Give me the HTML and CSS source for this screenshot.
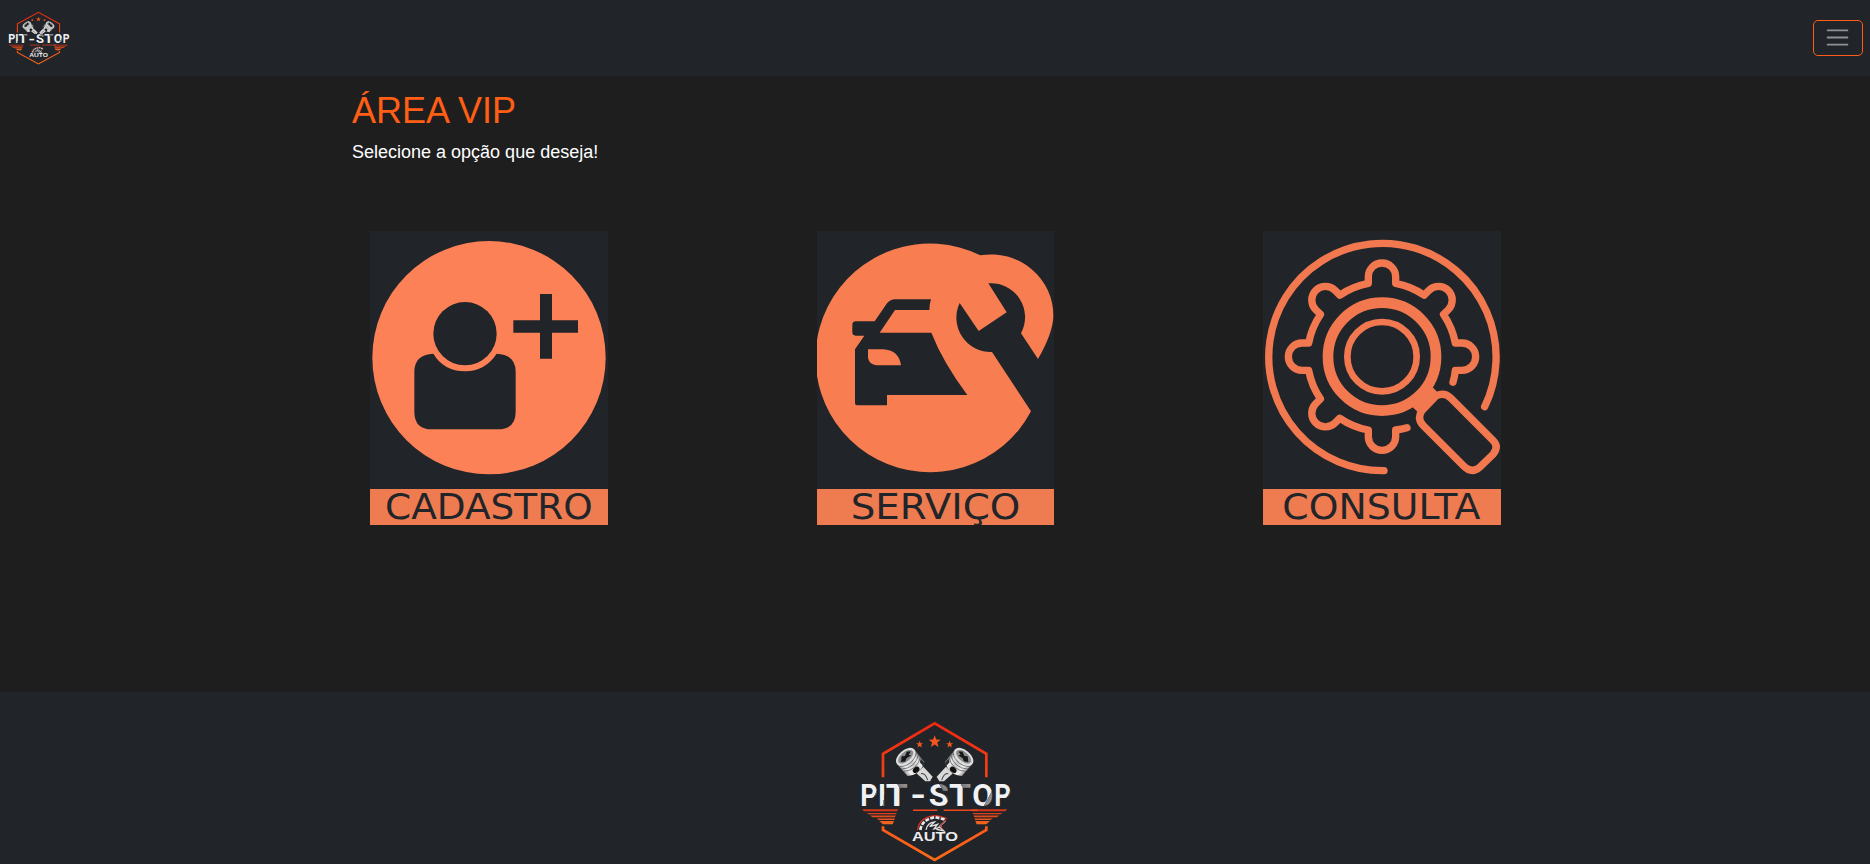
FILE: index.html
```html
<!DOCTYPE html>
<html lang="pt-BR">
<head>
<meta charset="utf-8">
<title>Pit-Stop Auto</title>
<link rel="stylesheet" href="styles.css">
</head>
<body>
<svg class="defs" aria-hidden="true">
  <defs>
    <linearGradient id="frame" gradientUnits="userSpaceOnUse" x1="0" y1="126" x2="0" y2="543"><stop offset="0" stop-color="#f02712"/><stop offset="1" stop-color="#ff6a18"/></linearGradient>
    <linearGradient id="wing" gradientUnits="userSpaceOnUse" x1="0" y1="387" x2="0" y2="432"><stop offset="0" stop-color="#d5301a"/><stop offset="1" stop-color="#f4681c"/></linearGradient>
    <linearGradient id="steel" x1="0" y1="0" x2="1" y2="0"><stop offset="0" stop-color="#999"/><stop offset=".2" stop-color="#f2f2f2"/><stop offset=".55" stop-color="#c8c8c8"/><stop offset=".8" stop-color="#eee"/><stop offset="1" stop-color="#777"/></linearGradient>
    <linearGradient id="chrome" x1="0" y1="0" x2="1" y2="1"><stop offset="0" stop-color="#f4f4f5"/><stop offset=".66" stop-color="#f0f0f2"/><stop offset=".67" stop-color="#858689"/><stop offset="1" stop-color="#b9babd"/></linearGradient>
    <linearGradient id="chrome2" x1="0" y1="1" x2="1" y2="0"><stop offset="0" stop-color="#f4f4f5"/><stop offset=".64" stop-color="#f0f0f2"/><stop offset=".65" stop-color="#77787b"/><stop offset="1" stop-color="#a9aaad"/></linearGradient>
    <g id="piston">
      <path d="M200 280L220 260L248 290L240 303H226Z" fill="#d8d8d8"/>
      <path d="M213 281q12-4 20 19" fill="none" stroke="#444" stroke-width="3"/>
      <g transform="translate(167 230) rotate(-40)">
        <path d="M-34 0L-33 48Q0 70 33 48L34 0Z" fill="url(#steel)"/>
        <path d="M-34 11Q0 36 34 11M-34 20Q0 45 34 20M-34 29Q0 54 34 29" fill="none" stroke="#505254" stroke-width="2"/>
        <ellipse cx="-1" cy="50" rx="11" ry="8" fill="#111"/>
        <path d="M31 34v16l-9 6V40z" fill="#292b2d"/>
        <ellipse rx="34" ry="20" fill="#dedede"/>
        <ellipse rx="27" ry="14" fill="#8a8b8c"/>
        <path d="M-21 3L-8-9L0-3L13-10L22-2L11 1L15 8L0 5L-10 10Z" fill="#171819"/>
      </g>
    </g>
    <path id="star" d="M0-19L4.700-6.500L18-6L7.600 2.500L11.500 15.500L0 8L-11.500 15.500L-7.600 2.500L-18-6L-4.700-6.500Z" fill="#f4561f"/>
    <g id="wings">
      <path d="M36 387H144L142 393H42Z"/><path d="M50 398H140L138 402H57Z"/><path d="M60 406H137L135 411H68Z"/><path d="M80 415H134L133 419H87Z"/><path d="M88 422H132L128 432H99Z"/>
    </g>
    <symbol id="logo" viewBox="30 120 456 428" preserveAspectRatio="none">
      <path d="M99 291V221L254 130L409 221V291M99 438V449L254 539L409 449V438" fill="none" stroke="url(#frame)" stroke-width="8"/>
      <use href="#star" x="254" y="185"/>
      <use href="#star" transform="translate(209 193) scale(.58)"/>
      <use href="#star" transform="translate(299 193) scale(.58)"/>
      <use href="#piston"/>
      <use href="#piston" transform="translate(508 0) scale(-1 1)"/>
      <g class="brand">
        <text x="31" y="376" textLength="52" lengthAdjust="spacingAndGlyphs" fill="url(#chrome)">P</text>
        <text x="84" y="376" textLength="24" lengthAdjust="spacingAndGlyphs" fill="url(#chrome)">I</text>
        <text x="107" y="376" textLength="66" lengthAdjust="spacingAndGlyphs" fill="url(#chrome2)">T</text>
        <text x="181" y="378" textLength="48" lengthAdjust="spacingAndGlyphs" fill="#f2f2f4">-</text>
        <text x="236" y="376" textLength="60" lengthAdjust="spacingAndGlyphs" fill="url(#chrome2)">S</text>
        <text x="297" y="376" textLength="66" lengthAdjust="spacingAndGlyphs" fill="url(#chrome2)">T</text>
        <text x="367" y="376" textLength="63" lengthAdjust="spacingAndGlyphs" fill="url(#chrome)">O</text>
        <text x="433" y="376" textLength="50" lengthAdjust="spacingAndGlyphs" fill="url(#chrome)">P</text>
      </g>
      <g fill="url(#wing)"><use href="#wings"/><use href="#wings" transform="translate(508 0) scale(-1 1)"/></g>
      <path d="M189 390H262M281 390H383" stroke="#ef481d" stroke-width="5"/>
      <path d="M203 450Q207 407 262 406L291 415" fill="none" stroke="#d72d22" stroke-width="4"/>
      <path d="M211 449Q216 417 256 411L287 418" fill="none" stroke="#e8e8e8" stroke-width="8" stroke-dasharray="12 4"/>
      <path d="M228 449Q232 427 254 425L239 439L263 432L252 446L275 440M286 422L268 439L281 452L259 447" fill="none" stroke="#dedede" stroke-width="4"/>
      <path d="M288 418L270 438L279 447" fill="none" stroke="#c63127" stroke-width="3"/>
      <text class="auto" x="186" y="483" textLength="138" lengthAdjust="spacingAndGlyphs">AUTO</text>
    </symbol>
  </defs>
</svg>

<header class="topbar">
  <svg class="logo-small"><use href="#logo"/></svg>
  <button class="toggler" aria-label="Menu">
    <svg viewBox="0 0 30 30"><path d="M4 7h22M4 15h22M4 23h22" stroke="#909294" stroke-width="2" stroke-linecap="round"/></svg>
  </button>
</header>

<main class="content">
  <h1>ÁREA VIP</h1>
  <p>Selecione a opção que deseja!</p>
  <nav class="tiles">
    <svg class="tile" viewBox="30 33 714 882">
      <path class="panel" d="M30 33H744V807H30Z"/>
      <circle cx="387" cy="413" r="350" fill="#fd8157"/>
      <g class="ink">
        <circle cx="315" cy="341" r="95"/>
        <path d="M220 401Q251 453 315 454Q376 453 410 401Q467 404 467 455V575Q467 628 413 628H216Q163 628 163 575V455Q163 404 220 401Z"/>
        <path d="M540 222H576V301H654V338H576V416H540V338H460V301H540Z"/>
      </g>
      <path class="band" d="M30 807H744V915H30Z"/>
      <text class="caption" x="75" y="898" textLength="623" lengthAdjust="spacingAndGlyphs">CADASTRO</text>
    </svg>
    <svg class="tile" viewBox="33 33 714 882">
      <path class="panel" d="M33 33H744V807H33Z"/>
      <path fill="#f87d51" d="M523 106A187 183 0 0 1 742 290Q740 340 696 417L645 340A102 102 0 0 0 547 190L602 277L518 333L461 249A103 103 0 0 0 558 396L675 574A343 343 0 1 1 523 106Z"/>
      <path class="ink" fill-rule="evenodd" d="M265 238H375Q370 253 370 270H267L221 338H376Q410 425 484 525H243V556H153Q147 556 147 550V388L175 347H149Q139 347 139 337V315Q139 304 149 304H206L242 251Q250 240 265 238ZM186 388V414Q190 434 212 436H285Q278 390 231 388Z"/>
      <path class="band" d="M33 807H744V915H33Z"/>
      <text class="caption" x="134" y="898" textLength="509" lengthAdjust="spacingAndGlyphs">SERVIÇO</text>
    </svg>
    <svg class="tile" viewBox="33 33 714 882">
      <path class="panel" d="M33 33H747V807H33Z"/>
      <g class="lines" transform="translate(390 410)">
        <path d="M6 342A341 341 0 1 1 308 150"/>
        <circle r="162" stroke-width="32"/>
        <circle r="104" stroke-width="20"/>
        <path d="M213 77A224 224 0 0 0 220 41L240 41A41 41 0 0 0 240-41L220-41A224 224 0 0 0 184.500-126.600L198.700-140.700A41 41 0 0 0 140.700-198.700L126.600-184.500A224 224 0 0 0 41-220L41-240A41 41 0 0 0-41-240L-41-220A224 224 0 0 0-126.600-184.500L-140.700-198.700A41 41 0 0 0-198.700-140.700L-184.500-126.600A224 224 0 0 0-220-41L-240-41A41 41 0 0 0-240 41L-220 41A224 224 0 0 0-184.500 126.600L-198.700 140.700A41 41 0 0 0-140.700 198.700L-126.600 184.500A224 224 0 0 0-41 220L-41 240A41 41 0 0 0 41 240L41 220A224 224 0 0 0 75 213"/>
        <path d="M150 90L166 106L108 167L92 152Z" fill="#f2784f" stroke="none"/>
        <path d="M162 118Q186 106 205 123L333 251Q352 270 333 293L295 330Q270 352 247 330L124 207Q104 187 119 163Z"/>
      </g>
      <path class="band" d="M33 807H747V915H33Z"/>
      <text class="caption" x="91" y="898" textLength="594" lengthAdjust="spacingAndGlyphs">CONSULTA</text>
    </svg>
  </nav>
</main>

<footer class="footer">
  <svg class="logo-large"><use href="#logo"/></svg>
</footer>
</body>
</html>
```
FILE: styles.css
```css
* { box-sizing: border-box; }
body {
  margin: 0;
  height: 864px;
  display: flex;
  flex-direction: column;
  overflow: hidden;
  background: #1e1e1e;
  color: #fff;
  font-family: "Liberation Sans", Arial, sans-serif;
}
.defs { width: 0; height: 0; flex: none; position: absolute; }
.topbar {
  height: 76px;
  flex: none;
  display: flex;
  align-items: center;
  justify-content: space-between;
  padding: 0 7px 0 8px;
  background: #212529;
}
.logo-small { width: 62px; height: 54px; }
.toggler {
  width: 50px;
  height: 36px;
  padding: 0 2px 1px 0;
  display: flex;
  align-items: center;
  justify-content: center;
  border: 1px solid #ff5e14;
  border-radius: 5px;
  background: transparent;
}
.toggler svg { width: 27px; height: 27px; }
.content {
  height: 616px;
  flex: none;
  width: 1166px;
  margin: 0 auto;
  padding-top: 13px;
}
h1 {
  margin: 0;
  font-size: 36px;
  font-weight: 400;
  line-height: 43px;
  color: #ff5e14;
}
p { margin: 7px 0 0; font-size: 18px; line-height: 27px; }
.tiles {
  display: flex;
  gap: 209px;
  margin: 65px 0 0 18px;
}
.tile { width: 238px; height: 294px; display: block; flex: none; }
.tile:last-child { margin-left: -1px; }
.panel, .ink { fill: #212529; }
.band { fill: #ef7b50; }
.caption { font-family: "DejaVu Sans", Verdana, sans-serif; font-size: 108px; fill: #212529; }
.lines { fill: none; stroke: #f2784f; stroke-width: 22px; stroke-linecap: round; stroke-linejoin: round; }
.footer {
  height: 172px;
  flex: none;
  display: flex;
  justify-content: center;
  padding-top: 28px;
  background: #212529;
}
.logo-large { width: 152px; height: 143px; margin-left: 2px; }
.brand { font-family: Roboto, sans-serif; font-size: 96px; font-weight: 700; }
.auto { font-family: "Liberation Sans", Arial, sans-serif; font-size: 38px; font-weight: 700; fill: #eee; }
```
